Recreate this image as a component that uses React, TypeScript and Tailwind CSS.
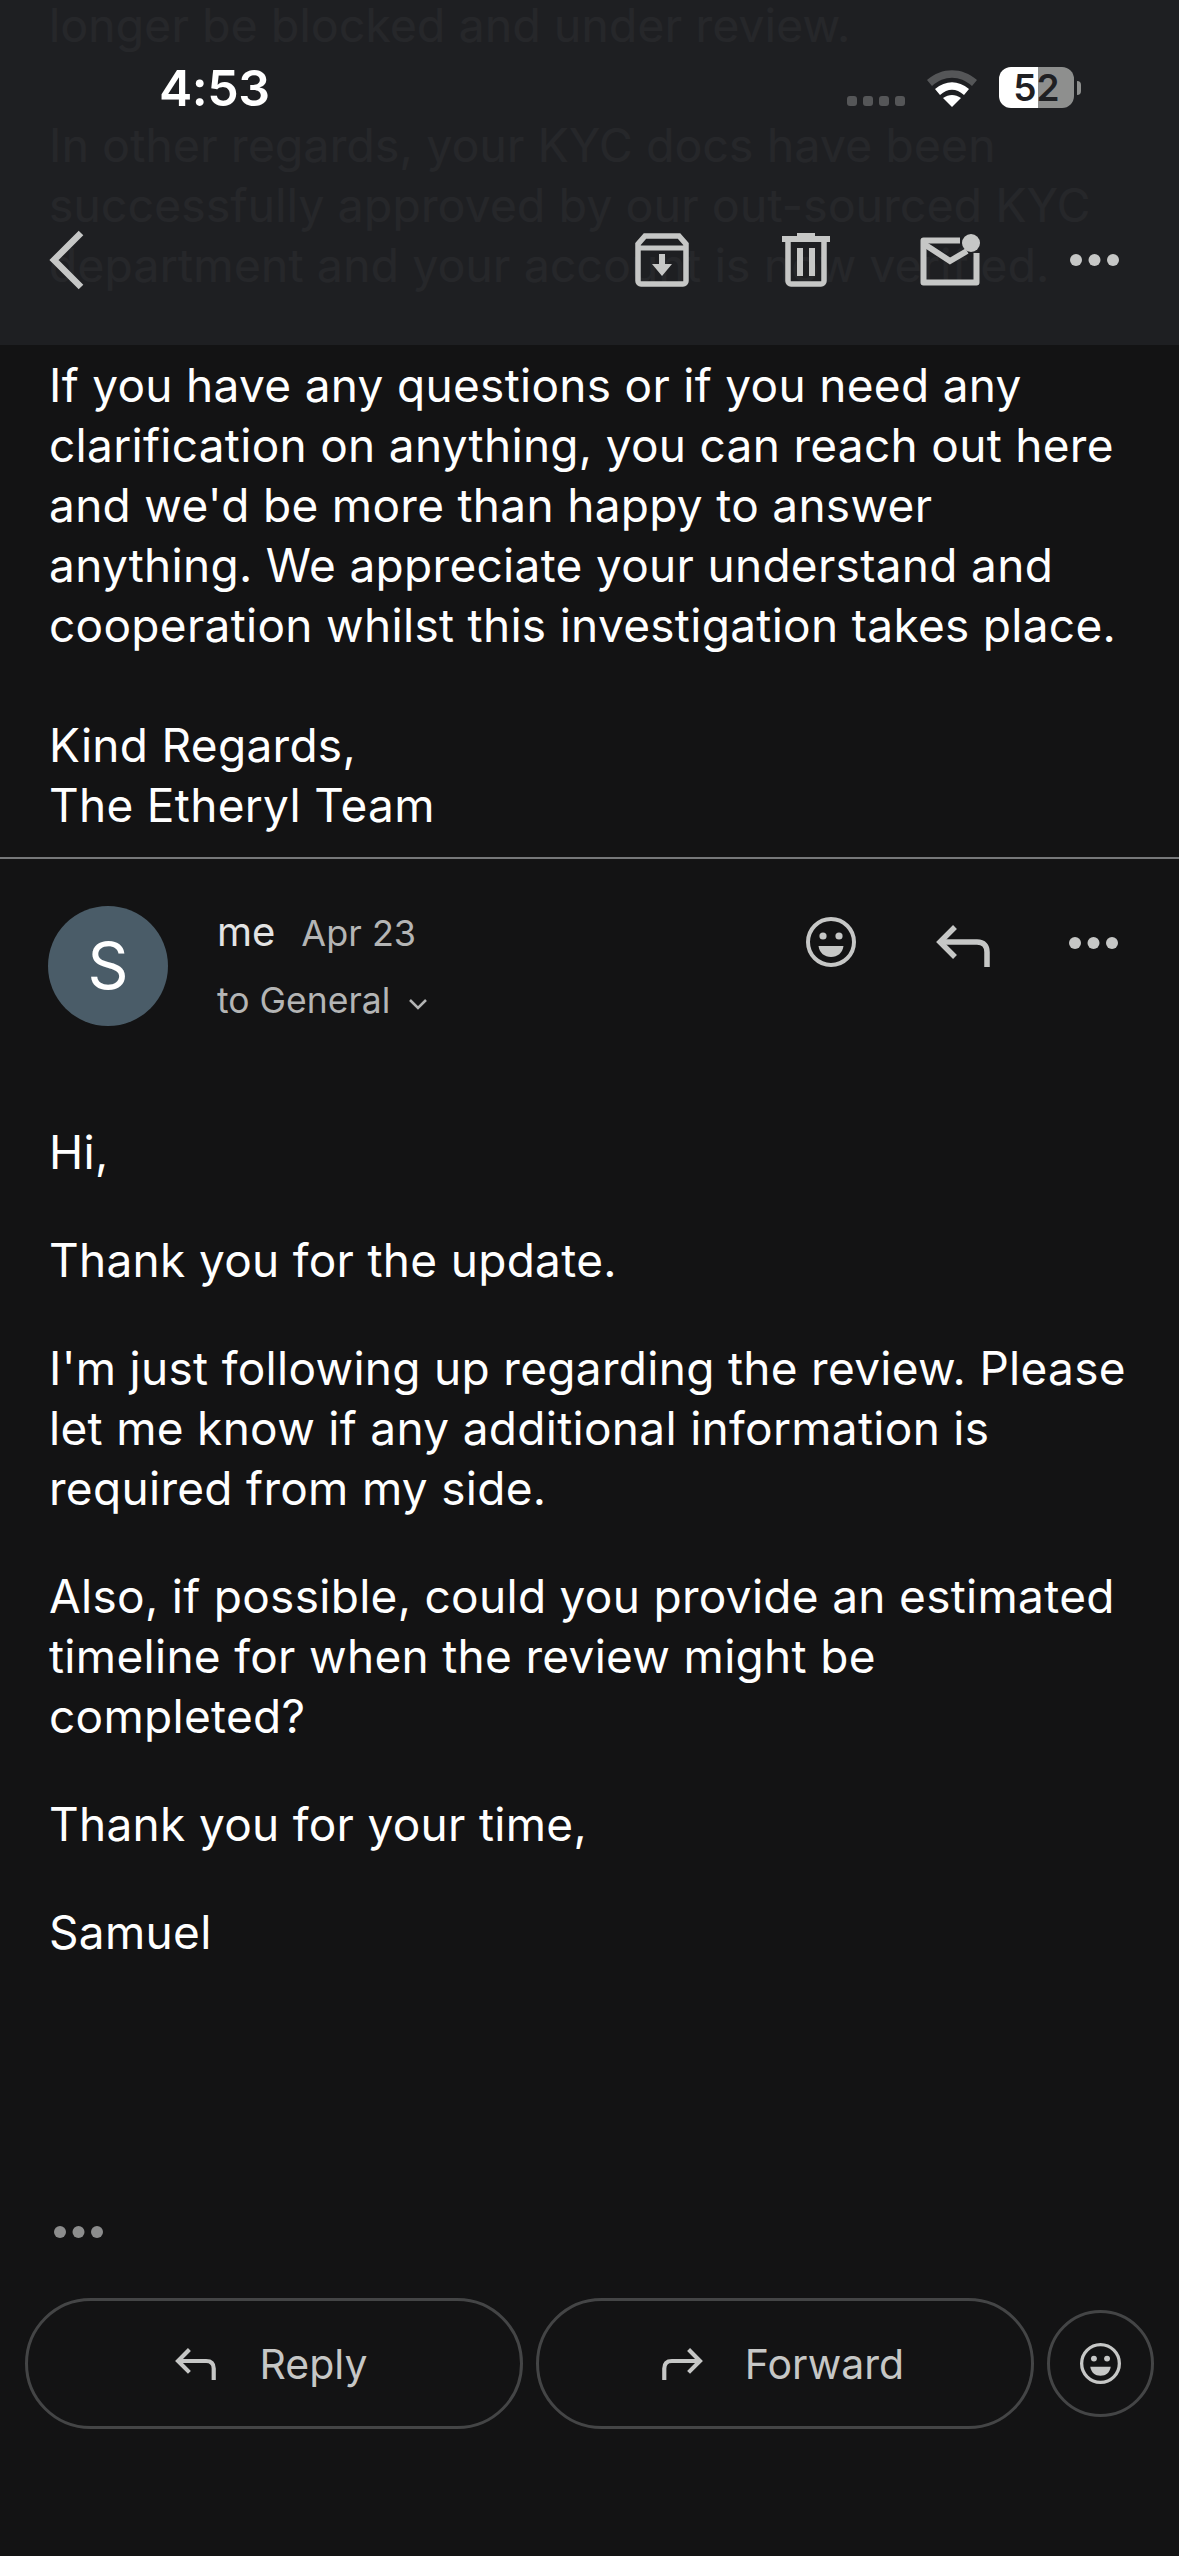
const Dots = ({ className = "" }: { className?: string }) => (
  <svg width="50" height="12" viewBox="0 0 50 12" className={className} fill="currentColor">
    <circle cx="6" cy="6" r="6" />
    <circle cx="24.5" cy="6" r="6" />
    <circle cx="43" cy="6" r="6" />
  </svg>
);

const Smile = ({ size }: { size: number }) => (
  <svg width={size} height={size} viewBox="0 0 50 50" fill="none">
    <circle cx="25" cy="25" r="23" stroke="currentColor" strokeWidth="4" />
    <circle cx="17" cy="19" r="3.6" fill="currentColor" />
    <circle cx="33" cy="19" r="3.6" fill="currentColor" />
    <path d="M12.5 29h25c-1 7-6 11-12.500 11s-11.500-4-12.500-11z" fill="currentColor" />
  </svg>
);

const ReplyIcon = ({ w, h }: { w: number; h: number }) => (
  <svg width={w} height={h} viewBox="0 0 54 42" fill="none" stroke="currentColor" strokeWidth="5.500">
    <path d="M19 2 4 17l15 15" />
    <path d="M4 17h37c7 0 10 4 10 10v15" />
  </svg>
);

const ForwardIcon = ({ w, h }: { w: number; h: number }) => (
  <svg width={w} height={h} viewBox="0 0 54 42" fill="none" stroke="currentColor" strokeWidth="5.500">
    <path d="M35 2 50 17 35 32" />
    <path d="M50 17H13C6 17 3 21 3 27v15" />
  </svg>
);

const P = ({ children }: { children: React.ReactNode }) => <p className="mb-[48px]">{children}</p>;

export default function App() {
  return (
    <div
      className="relative h-[2556px] w-[1179px] overflow-hidden bg-[#131314] text-white"
      style={{ fontFamily: "Inter, 'Liberation Sans', sans-serif" }}
    >
      {/* Top bar, translucent over the scrolled mail text */}
      <header className="absolute inset-x-0 top-0 z-10 h-[345px] bg-[#1f2023]/[0.97]">
        <div className="flex items-start pl-[159px] pr-[98px] pt-[61px]">
          <span className="text-[50px] font-semibold leading-[54px] tracking-[-0.5px]">4:53</span>
          <div className="ml-auto flex items-start">
            <div className="mt-[35px] flex gap-[6px]">
              {[0, 1, 2, 3].map((i) => (
                <span key={i} className="h-[10px] w-[10px] rounded-[3px] bg-[#555658]" />
              ))}
            </div>
            <svg width="52" height="38" viewBox="0 0 52 38" className="ml-[21px] mt-[8px]">
              <path d="M1 11C16-2 36-2 51 11l-5 6C34 6 18 6 6 17z" fill="#555658" />
              <path d="M9 20c11-9 23-9 34 0l-5 6c-8-7-16-7-24 0z" fill="#fff" />
              <path d="M17 29c6-4 12-4 18 0l-9 9z" fill="#fff" />
            </svg>
            <div className="ml-[21px] mt-[6px] flex h-[41px] w-[75px] items-center justify-center rounded-[12px] bg-[linear-gradient(90deg,#fff_52%,#8e8f8e_52%)] text-[37px] font-semibold leading-none text-[#1f2023]">
              52
            </div>
            <span className="ml-[3px] mt-[20px] h-[14px] w-[4px] rounded-r-full bg-[#8e8f8e]" />
          </div>
        </div>
        <div className="mt-[115px] flex items-center pl-[49px] pr-[59px] text-[#c6c7c6]">
          <svg width="36" height="60" viewBox="0 0 36 60" fill="none" stroke="currentColor" strokeWidth="6.500">
            <path d="M32 3 5 30l27 27" />
          </svg>
          <svg width="54" height="54" viewBox="0 0 54 54" fill="none" className="ml-auto">
            <path d="M10 3h34l7 8v37a3 3 0 0 1-3 3H6a3 3 0 0 1-3-3V11z" stroke="currentColor" strokeWidth="5.500" />
            <path d="M3 15h48" stroke="currentColor" strokeWidth="5" />
            <path d="M24 21h6v10h7L27 43 17 31h7z" fill="currentColor" />
          </svg>
          <svg width="48" height="54" viewBox="0 0 48 54" fill="none" className="ml-[93px]">
            <path d="M15 0h18v3h15v6H0V3h15z" fill="currentColor" />
            <path d="M6 6v42a3 3 0 0 0 3 3h30a3 3 0 0 0 3-3V6" stroke="currentColor" strokeWidth="5.500" />
            <path d="M15 15h6v28h-6zM27 15h6v28h-6z" fill="currentColor" />
          </svg>
          <svg width="61" height="52" viewBox="0 0 61 52" fill="none" className="ml-[90px]">
            <path d="M40 6.500H3.500v42h53V19" stroke="currentColor" strokeWidth="6" strokeLinejoin="round" />
            <path d="M4 10l26 17 17-10" stroke="currentColor" strokeWidth="6" />
            <circle cx="51" cy="9" r="9" fill="currentColor" />
          </svg>
          <Dots className="ml-[89px]" />
        </div>
      </header>

      {/* Scrolled conversation */}
      <main className="-mt-[5px] text-[46px] leading-[60px] tracking-[0.3px] text-white">
        <section className="px-[49px]">
          <p>longer be blocked and under review.</p>
          <p className="mt-[60px]">
            In other regards, your KYC docs have been
            <br />
            successfully approved by our out-sourced KYC
            <br />
            department and your account is now verified.
          </p>
          <p className="mt-[60px]">
            If you have any questions or if you need any
            <br />
            clarification on anything, you can reach out here
            <br />
            and we'd be more than happy to answer
            <br />
            anything. We appreciate your understand and
            <br />
            cooperation whilst this investigation takes place.
          </p>
          <p className="mt-[60px]">
            Kind Regards,
            <br />
            The Etheryl Team
          </p>
        </section>

        <div className="mt-[22px] h-[2px] bg-[#77787a]" />

        <section className="flex items-start pl-[48px] pr-[60px] pt-[47px] tracking-normal">
          <div className="flex h-[120px] w-[120px] shrink-0 items-center justify-center rounded-full bg-[#4a5c68] text-[64px] leading-none text-white">
            S
          </div>
          <div className="ml-[49px] leading-none">
            <div className="flex items-baseline">
              <span className="text-[40px] leading-[52px] text-[#e3e3e3]">me</span>
              <span className="ml-[26px] text-[36px] text-[#b4b5b5]">Apr 23</span>
            </div>
            <div className="mt-[17px] flex items-center text-[35.500px] leading-[52px] text-[#b4b5b5]">
              to General
              <svg width="20" height="12" viewBox="0 0 20 12" fill="none" stroke="currentColor" strokeWidth="2.500" className="ml-[18px] mt-[6px]">
                <path d="M2 2l8 8 8-8" />
              </svg>
            </div>
          </div>
          <div className="ml-auto mt-[11px] flex items-center text-[#c6c7c6]">
            <Smile size={50} />
            <span className="ml-[80px] mt-[8px]">
              <ReplyIcon w={54} h={42} />
            </span>
            <Dots className="ml-[79px] mt-[2px]" />
          </div>
        </section>

        <section className="px-[49px] pt-[95px]">
          <P>Hi,</P>
          <P>Thank you for the update.</P>
          <P>
            I'm just following up regarding the review. Please
            <br />
            let me know if any additional information is
            <br />
            required from my side.
          </P>
          <P>
            Also, if possible, could you provide an estimated
            <br />
            timeline for when the review might be
            <br />
            completed?
          </P>
          <P>Thank you for your time,</P>
          <P>Samuel</P>
        </section>

        <div className="mt-[264px] pl-[54px] text-[#8c8d8d]">
          <Dots className="block" />
        </div>

        <section className="mt-[60px] flex items-center gap-[13px] pl-[25px] tracking-normal text-[#c6c7c6]">
          <button className="flex h-[131px] w-[498px] items-center justify-center gap-[44px] rounded-full border-[3px] border-[#444546] pr-[6px] text-[41px]">
            <ReplyIcon w={41} h={32} />
            Reply
          </button>
          <button className="flex h-[131px] w-[498px] items-center justify-center gap-[42px] rounded-full border-[3px] border-[#444546] pr-[4px] text-[41px]">
            <ForwardIcon w={41} h={32} />
            Forward
          </button>
          <button className="flex h-[107px] w-[107px] items-center justify-center rounded-full border-[3px] border-[#444546]">
            <Smile size={41} />
          </button>
        </section>
      </main>
    </div>
  );
}
